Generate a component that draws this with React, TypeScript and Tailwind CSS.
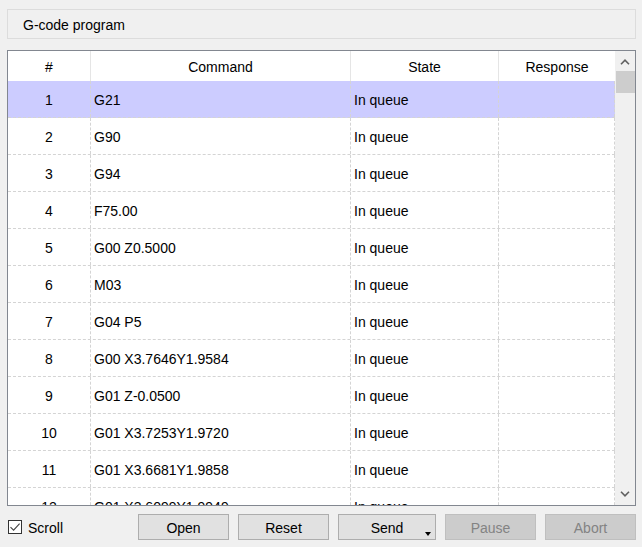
import React from "react";

type Row = { n: number; cmd: string; state: string; response: string };

const ROWS: Row[] = [
  { n: 1, cmd: "G21", state: "In queue", response: "" },
  { n: 2, cmd: "G90", state: "In queue", response: "" },
  { n: 3, cmd: "G94", state: "In queue", response: "" },
  { n: 4, cmd: "F75.00", state: "In queue", response: "" },
  { n: 5, cmd: "G00 Z0.5000", state: "In queue", response: "" },
  { n: 6, cmd: "M03", state: "In queue", response: "" },
  { n: 7, cmd: "G04 P5", state: "In queue", response: "" },
  { n: 8, cmd: "G00 X3.7646Y1.9584", state: "In queue", response: "" },
  { n: 9, cmd: "G01 Z-0.0500", state: "In queue", response: "" },
  { n: 10, cmd: "G01 X3.7253Y1.9720", state: "In queue", response: "" },
  { n: 11, cmd: "G01 X3.6681Y1.9858", state: "In queue", response: "" },
  { n: 12, cmd: "G01 X3.6099Y1.9949", state: "In queue", response: "" },
];

function Chevron({ up }: { up?: boolean }) {
  return (
    <svg width="10" height="6" viewBox="0 0 10 6" className="block">
      <path
        d={up ? "M1 5.2 L5 1.2 L9 5.2" : "M1 0.8 L5 4.8 L9 0.8"}
        fill="none"
        stroke="#606060"
        strokeWidth="1.6"
      />
    </svg>
  );
}

function Button({ label, disabled, menu, width }: { label: string; disabled?: boolean; menu?: boolean; width: string }) {
  return (
    <div
      className={
        "relative flex h-[26px] items-center justify-center border pt-[2px] " +
        width +
        " " +
        (disabled
          ? "border-[#bfbfbf] bg-[#cccccc] text-[#838383]"
          : "border-[#adadad] bg-[#e1e1e1] text-black")
      }
    >
      {label}
      {menu && (
        <span className="absolute bottom-[3px] right-[4px] h-0 w-0 border-x-[3.5px] border-t-[4px] border-x-transparent border-t-black" />
      )}
    </div>
  );
}

export default function App() {
  return (
    <div className="h-[547px] w-[642px] overflow-hidden bg-[#f0f0f0] px-[7px] pt-[9px] font-['Liberation_Sans',Arial,sans-serif] text-[14px] text-black">
      {/* Group title */}
      <div className="flex h-[30px] w-[629px] items-center border border-[#dcdcdc] pl-[15px] pt-[2px]">
        G-code program
      </div>

      {/* Program table */}
      <div className="mt-[11px] flex h-[456px] w-[629px] border border-[#828790] bg-white">
        <div className="w-[607px] overflow-hidden">
          <div className="flex h-[30px]">
            <div className="flex w-[83px] items-center justify-center border-r border-[#e5e5e5] pt-[2px]">#</div>
            <div className="flex w-[260px] items-center justify-center border-r border-[#e5e5e5] pt-[2px]">Command</div>
            <div className="flex w-[148px] items-center justify-center border-r border-[#e5e5e5] pt-[2px]">State</div>
            <div className="flex w-[116px] items-center justify-center pt-[2px]">Response</div>
          </div>
          {ROWS.map((r) => (
            <div
              key={r.n}
              className={
                "flex h-[37px] border-b border-dashed border-[#d4d4d4] " +
                (r.n === 1 ? "bg-[#ccccff]" : "")
              }
            >
              <div className="flex w-[83px] items-center justify-center border-r border-dashed border-[#d4d4d4] pt-[2px]">{r.n}</div>
              <div className="flex w-[260px] items-center border-r border-dashed border-[#d4d4d4] pl-[3px] pt-[2px]">{r.cmd}</div>
              <div className="flex w-[148px] items-center border-r border-dashed border-[#d4d4d4] pl-[3px] pt-[2px]">{r.state}</div>
              <div className="flex w-[116px] items-center border-r border-dashed border-[#d4d4d4] pl-[3px] pt-[2px]">{r.response}</div>
            </div>
          ))}
        </div>

        {/* Scrollbar */}
        <div className="flex w-[20px] flex-col bg-[#f0f0f0]">
          <div className="flex h-[20px] items-center justify-center pt-[2px]">
            <Chevron up />
          </div>
          <div className="ml-[1px] h-[22px] bg-[#cdcdcd]" />
          <div className="flex-1" />
          <div className="flex h-[20px] items-center justify-center pb-[2px]">
            <Chevron />
          </div>
        </div>
      </div>

      {/* Bottom controls */}
      <div className="mt-[8px] flex h-[26px] w-[629px] items-center">
        <div className="flex items-center">
          <div className="ml-[1px] flex h-[14px] w-[14px] items-center justify-center border border-[#333333] bg-white">
            <svg width="12" height="12" viewBox="0 0 12 12">
              <path d="M1.5 6.2 L4.6 9.2 L10.6 2.6" fill="none" stroke="#444" strokeWidth="1.1" />
            </svg>
          </div>
          <span className="ml-[6px] pt-[2px]">Scroll</span>
        </div>
        <div className="ml-auto flex gap-[9px]">
          <Button label="Open" width="w-[91px]" />
          <Button label="Reset" width="w-[91px]" />
          <Button label="Send" width="w-[98px]" menu />
          <Button label="Pause" width="w-[91px]" disabled />
          <Button label="Abort" width="w-[91px]" disabled />
        </div>
      </div>
    </div>
  );
}
